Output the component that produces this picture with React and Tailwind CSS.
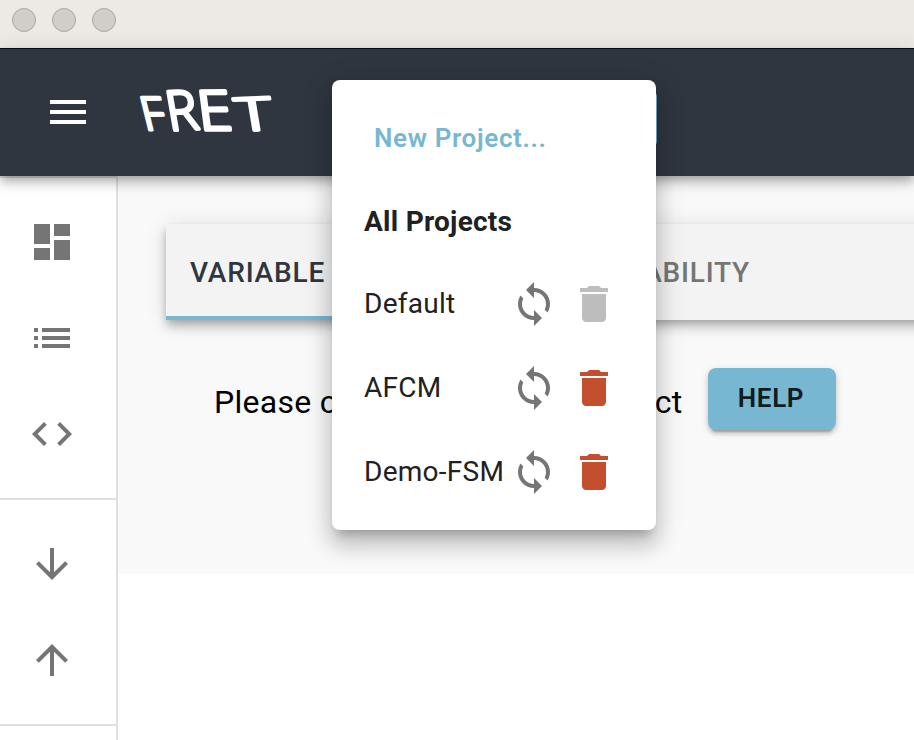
const icons = {
  dashboard: "M3 13h8V3H3v10zm0 8h8v-6H3v6zm10 0h8V11h-8v10zm0-18v6h8V3h-8z",
  list: "M3 13h2v-2H3v2zm0 4h2v-2H3v2zm0-8h2V7H3v2zm4 4h14v-2H7v2zm0 4h14v-2H7v2zM7 7v2h14V7H7z",
  code: "M9.4 16.6L4.8 12l4.6-4.6L8 6l-6 6 6 6 1.4-1.4zm5.2 0l4.6-4.6-4.6-4.6L16 6l6 6-6 6-1.4-1.4z",
  down: "M20 12l-1.41-1.41L13 16.17V4h-2v12.17l-5.58-5.59L4 12l8 8 8-8z",
  up: "M4 12l1.41 1.41L11 7.83V20h2V7.83l5.58 5.59L20 12l-8-8-8 8z",
  menu: "M3 18h18v-2H3v2zm0-5h18v-2H3v2zm0-7v2h18V6H3z",
  sync: "M12 4V1L8 5l4 4V6c3.31 0 6 2.69 6 6 0 1.01-.25 1.97-.7 2.8l1.46 1.46C19.54 15.03 20 13.57 20 12c0-4.42-3.58-8-8-8zm0 14c-3.31 0-6-2.69-6-6 0-1.01.25-1.97.7-2.8L5.24 7.74C4.46 8.97 4 10.43 4 12c0 4.42 3.58 8 8 8v3l4-4-4-4v3z",
  trash: "M6 19c0 1.1.9 2 2 2h8c1.1 0 2-.9 2-2V7H6v12zM19 4h-3.5l-1-1h-5l-1 1H5v2h14V4z",
};

function Icon({ name, className = "text-[#757575]" }) {
  return (
    <svg viewBox="0 0 24 24" fill="currentColor" className={`size-12 shrink-0 ${className}`}>
      <path d={icons[name]} />
    </svg>
  );
}

function NavItem({ name }) {
  return (
    <li className="flex h-24 items-center pl-7">
      <Icon name={name} />
    </li>
  );
}

function Logo() {
  return (
    <svg
      viewBox="0 0 136 52"
      className="h-[52px] w-[136px] shrink-0 overflow-visible font-['Open_Sans',sans-serif] font-light"
      fill="white"
      stroke="white"
      strokeWidth="3.2"
      strokeLinejoin="round"
      strokeLinecap="round"
      fontSize="47"
    >
      <text transform="matrix(.98 -.01 .24 .97 9 46)">F</text>
      <text transform="matrix(1.1 -.06 .2 1.15 33.5 46.5)">R</text>
      <text transform="matrix(1.3 -.01 .15 1.16 64 46)">E</text>
      <text transform="matrix(1.46 -.06 .16 .97 102.5 47)">T</text>
    </svg>
  );
}

function ProjectRow({ name, locked }) {
  return (
    <li className="flex h-[84px] items-center pl-8 text-[#212121]">
      <span className="w-[146px] whitespace-nowrap">{name}</span>
      <Icon name="sync" />
      <Icon name="trash" className={locked ? "ml-3 text-[#bdbdbd]" : "ml-3 text-[#c44f2f]"} />
    </li>
  );
}

export default function App() {
  return (
    <div className="relative flex h-[740px] w-[914px] flex-col overflow-hidden bg-white font-[Roboto,sans-serif] text-black">
      <div className="flex h-12 shrink-0 gap-4 bg-[#ede9e4] pt-2 pl-3">
        <span className="size-6 rounded-full border border-[#aaa7a2] bg-[#d1cdc8]" />
        <span className="size-6 rounded-full border border-[#aaa7a2] bg-[#d1cdc8]" />
        <span className="size-6 rounded-full border border-[#aaa7a2] bg-[#d1cdc8]" />
      </div>
      <header className="relative z-10 flex h-32 shrink-0 items-center border-t border-[#030b12] bg-[#2f3640] pb-px pl-11 shadow-[0_4px_8px_-2px_rgba(0,0,0,0.2),0_8px_10px_0_rgba(0,0,0,0.14),0_2px_20px_0_rgba(0,0,0,0.12)]">
        <Icon name="menu" className="text-white" />
        <div className="ml-[44px] pb-1">
          <Logo />
        </div>
        <div className="mt-3.5 ml-[61px] h-[60px] w-[324px] rounded-lg bg-[#77b7d2]" />
      </header>
      <div className="flex min-h-0 grow">
        <nav className="w-[118px] shrink-0 border-t-2 border-r-2 border-[#e0e0e0] bg-white">
          <ul className="border-b-2 border-[#e0e0e0] py-4">
            <NavItem name="dashboard" />
            <NavItem name="list" />
            <NavItem name="code" />
          </ul>
          <ul className="border-b-2 border-[#e0e0e0] py-4">
            <NavItem name="down" />
            <NavItem name="up" />
          </ul>
        </nav>
        <main className="h-[398px] min-w-0 grow overflow-hidden bg-[#f9f9f9] pt-12 pl-12">
          <div className="flex h-24 w-[900px] bg-[#f3f3f3] text-[28px] font-medium tracking-[0.8px] whitespace-nowrap shadow-[0_4px_8px_-2px_rgba(0,0,0,0.2),0_8px_10px_0_rgba(0,0,0,0.14),0_2px_20px_0_rgba(0,0,0,0.12)]">
            <div className="flex w-[321px] items-center border-b-4 border-[#77b7d2] pt-1.5 pl-6 text-[#2f3640]">
              VARIABLE MAPPING
            </div>
            <div className="flex w-[287px] items-center justify-end pt-0.5 pr-6 text-[#757575]">REALIZABILITY</div>
          </div>
          <div className="mt-12 flex pl-12">
            <p className="w-[494px] pt-2.5 text-[32px] leading-[48px] tracking-[0.28px] whitespace-nowrap">
              Please choose a specific project
            </p>
            <button className="h-[62px] w-32 rounded-lg bg-[#77b7d2] pr-0.5 pb-0.5 text-[26px] font-semibold tracking-[0.65px] text-[#101b20] shadow-[0_6px_2px_-4px_rgba(0,0,0,0.2),0_4px_4px_0_rgba(0,0,0,0.14),0_2px_10px_0_rgba(0,0,0,0.12)]">
              HELP
            </button>
          </div>
        </main>
      </div>
      <div className="absolute top-20 left-[332px] z-20 h-[450px] w-[324px] rounded-lg bg-white py-4 text-[28px] tracking-[0.26px] shadow-[0_10px_10px_-6px_rgba(0,0,0,0.2),0_16px_20px_2px_rgba(0,0,0,0.14),0_6px_28px_4px_rgba(0,0,0,0.12)]">
        <div className="flex h-[84px] items-center pl-[42px] text-[26px] font-semibold tracking-[0.65px] text-[#77b7d2]">
          New Project...
        </div>
        <div className="flex h-[82px] items-center pt-0.5 pl-8 font-bold text-[#212121]">All Projects</div>
        <ul>
          <ProjectRow name="Default" locked />
          <ProjectRow name="AFCM" />
          <ProjectRow name="Demo-FSM" />
        </ul>
      </div>
    </div>
  );
}
